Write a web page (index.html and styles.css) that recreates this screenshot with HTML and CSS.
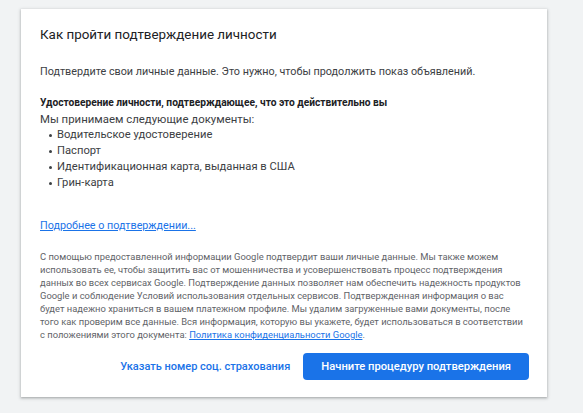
FILE: index.html
```html
<!DOCTYPE html>
<html lang="ru">
<head>
<meta charset="utf-8">
<title>Как пройти подтверждение личности</title>
<link rel="stylesheet" href="styles.css">
</head>
<body>
<div class="page">
  <div class="card">
    <h1 class="title">Как пройти подтверждение личности</h1>
    <p class="intro">Подтвердите свои личные данные. Это нужно, чтобы продолжить показ объявлений.</p>
    <div class="docs">
      <div class="docs-head">Удостоверение личности, подтверждающее, что это действительно вы</div>
      <div class="docs-sub">Мы принимаем следующие документы:</div>
      <ul class="docs-list">
        <li>Водительское удостоверение</li>
        <li>Паспорт</li>
        <li>Идентификационная карта, выданная в США</li>
        <li>Грин-карта</li>
      </ul>
    </div>
    <a class="more" href="#">Подробнее о подтверждении...</a>
    <p class="legal">С помощью предоставленной информации Google подтвердит ваши личные данные. Мы также можем использовать ее, чтобы защитить вас от мошенничества и усовершенствовать процесс подтверждения данных во всех сервисах Google. Подтверждение данных позволяет нам обеспечить надежность продуктов Google и соблюдение Условий использования отдельных сервисов. Подтвержденная информация о вас будет надежно храниться в вашем платежном профиле. Мы удалим загруженные вами документы, после того как проверим все данные. Вся информация, которую вы укажете, будет использоваться в соответствии с положениями этого документа: <a href="#">Политика конфиденциальности Google</a>.</p>
    <div class="actions">
      <button class="btn-text" type="button">Указать номер соц. страхования</button>
      <button class="btn-primary" type="button">Начните процедуру подтверждения</button>
    </div>
  </div>
</div>
</body>
</html>
```
FILE: styles.css
```css
html, body {
  margin: 0;
  padding: 0;
  background: #f1f3f4;
  font-family: Roboto, "Noto Sans", Arial, sans-serif;
}
.page {
  padding: 9px 36px 16px 21px;
}
.card {
  width: 526px;
  box-sizing: border-box;
  background: #ffffff;
  padding: 16px 18px 17px 19px;
  box-shadow: 0 1px 2px rgba(60, 64, 67, 0.3), 0 1px 3px 1px rgba(60, 64, 67, 0.15);
  display: flex;
  flex-direction: column;
}
.title {
  margin: 0;
  font-size: 13.4px;
  line-height: 20px;
  font-weight: 400;
  color: #202124;
}
.intro {
  margin: 19px 0 0;
  font-size: 10.8px;
  line-height: 16px;
  color: #3c4043;
}
.docs {
  margin-top: 15px;
  font-size: 11.2px;
  line-height: 16px;
  color: #3c4043;
}
.docs-head {
  font-size: 10.2px;
  font-weight: 700;
  color: #202124;
}
.docs-sub {
  font-size: 11.4px;
}
.docs-list {
  margin: 0;
  padding: 0;
  list-style: none;
}
.docs-list li::before {
  content: "";
  display: inline-block;
  width: 3px;
  height: 3px;
  border-radius: 50%;
  background: #3c4043;
  margin: 0 5px 0 9px;
  vertical-align: middle;
}
.more {
  margin-top: 27px;
  align-self: flex-start;
  font-size: 10.75px;
  line-height: 16px;
  color: #1a73e8;
  text-decoration: underline;
}
.legal {
  margin: 16px 0 0;
  font-size: 9.4px;
  line-height: 13px;
  color: #5f6368;
}
.legal a {
  color: #1a73e8;
  text-decoration: underline;
}
.actions {
  margin-top: 12px;
  display: flex;
  justify-content: flex-end;
  align-items: center;
  gap: 13px;
}
.btn-text, .btn-primary {
  font-family: Roboto, "Noto Sans", Arial, sans-serif;
  font-weight: 500;
  height: 27px;
  border-radius: 4px;
  border: none;
  cursor: pointer;
}
.btn-text {
  font-size: 11px;
  background: transparent;
  color: #1a73e8;
  padding: 0;
}
.btn-primary {
  font-size: 11.2px;
  background: #1a73e8;
  color: #ffffff;
  padding: 0 18px;
}
```
